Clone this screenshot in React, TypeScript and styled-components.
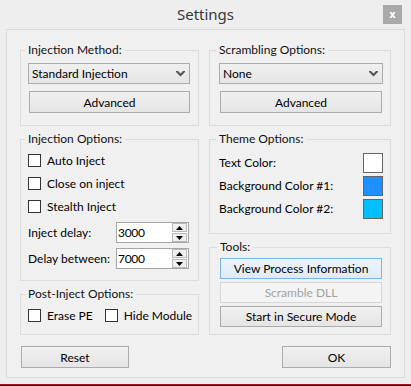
import styled, { createGlobalStyle } from "styled-components";

const GlobalStyle = createGlobalStyle`
  html, body {
    margin: 0;
    padding: 0;
    background: #3a0a0a;
  }
  body {
    font-family: "Lato", "Liberation Sans", sans-serif;
    font-size: 12px;
    color: #000;
  }
`;

const Chevron = () => (
  <svg width="9" height="7" viewBox="0 0 9 7">
    <polygon points="0,1 2,1 4.5,3.5 7,1 9,1 9,2 4.5,6.5 0,2" fill="#555" />
  </svg>
);

const Arrow = ({ up }: { up?: boolean }) => (
  <svg width="7" height="4" viewBox="0 0 7 4">
    <polygon points={up ? "3.5,0 7,4 0,4" : "0,0 7,0 3.5,4"} fill="#000" />
  </svg>
);

export default function App() {
  return (
    <Window>
      <GlobalStyle />
      <TitleBar>
        <Title>Settings</Title>
        <CloseButton>x</CloseButton>
      </TitleBar>
      <Panel>
        <Column>
          <Group $pad="6px 8px 12px 7px">
            <Legend>Injection Method:</Legend>
            <Select>
              <span>Standard Injection</span>
              <Chevron />
            </Select>
            <Button $mt={7} $h={22} style={{ marginLeft: 1 }}>
              Advanced
            </Button>
          </Group>
          <Group $pad="3px 8px 11px 7px">
            <Legend>Injection Options:</Legend>
            <CheckRow>
              <Box />
              Auto Inject
            </CheckRow>
            <CheckRow>
              <Box />
              Close on inject
            </CheckRow>
            <CheckRow>
              <Box />
              Stealth Inject
            </CheckRow>
            <SpinRow $mt={4}>
              <span>Inject delay:</span>
              <Spin>
                <SpinValue>3000</SpinValue>
                <SpinButtons>
                  <SpinButton>
                    <Arrow up />
                  </SpinButton>
                  <SpinButton>
                    <Arrow />
                  </SpinButton>
                </SpinButtons>
              </Spin>
            </SpinRow>
            <SpinRow $mt={5}>
              <span>Delay between:</span>
              <Spin>
                <SpinValue>7000</SpinValue>
                <SpinButtons>
                  <SpinButton>
                    <Arrow up />
                  </SpinButton>
                  <SpinButton>
                    <Arrow />
                  </SpinButton>
                </SpinButtons>
              </Spin>
            </SpinRow>
          </Group>
          <Group $pad="3px 8px 7px 7px">
            <Legend>Post-Inject Options:</Legend>
            <InlineChecks>
              <CheckRow>
                <Box />
                Erase PE
              </CheckRow>
              <CheckRow>
                <Box />
                Hide Module
              </CheckRow>
            </InlineChecks>
          </Group>
        </Column>
        <Column>
          <Group $pad="6px 7px 12px 9px">
            <Legend>Scrambling Options:</Legend>
            <Select>
              <span>None</span>
              <Chevron />
            </Select>
            <Button $mt={7} $h={22} style={{ margin: "7px 1px 0" }}>
              Advanced
            </Button>
          </Group>
          <Group $pad="5px 7px 13px 9px">
            <Legend>Theme Options:</Legend>
            <ColorRow>
              <span>Text Color:</span>
              <Swatch $color="#ffffff" />
            </ColorRow>
            <ColorRow>
              <span>Background Color #1:</span>
              <Swatch $color="#1e90ff" />
            </ColorRow>
            <ColorRow>
              <span>Background Color #2:</span>
              <Swatch $color="#00bfff" />
            </ColorRow>
          </Group>
          <Group $pad="4px 8px 7px 10px">
            <Legend>Tools:</Legend>
            <ToolStack>
              <Button $h={21} $variant="hover">
                View Process Information
              </Button>
              <Button $h={21} $variant="disabled">
                Scramble DLL
              </Button>
              <Button $h={21}>Start in Secure Mode</Button>
            </ToolStack>
          </Group>
        </Column>
        <Footer>
          <Button $h={22} $w={108} style={{ marginLeft: 1 }}>
            Reset
          </Button>
        </Footer>
        <Footer $end>
          <Button $h={22} $w={109}>
            OK
          </Button>
        </Footer>
      </Panel>
    </Window>
  );
}

const Window = styled.div`
  width: 411px;
  height: 384px;
  background: #eeeeee;
  display: flex;
  flex-direction: column;
  border-bottom: 1px solid #a01414;
`;

const TitleBar = styled.div`
  height: 29px;
  display: grid;
  grid-template-columns: 1fr auto 1fr;
  align-items: center;
`;

const Title = styled.div`
  grid-column: 2;
  font-family: "Noto Sans", "Liberation Sans", sans-serif;
  font-size: 15px;
  color: #383838;
  margin-top: -1px;
`;

const CloseButton = styled.div`
  justify-self: end;
  margin-right: 9px;
  width: 19px;
  height: 19px;
  background: #a9a9a9;
  color: #fff;
  font-family: "DejaVu Sans", sans-serif;
  font-weight: bold;
  font-size: 10px;
  display: flex;
  align-items: center;
  justify-content: center;
  line-height: 1;
`;

const Panel = styled.div`
  margin: 0 6px;
  height: 349px;
  box-sizing: border-box;
  border: 1px solid #dadada;
  background: #f0f0f0;
  padding: 13px 13px 9px;
  display: grid;
  grid-template-columns: 179px 1fr;
  grid-template-rows: 292px 22px;
  column-gap: 10px;
  row-gap: 11px;
`;

const Column = styled.div`
  display: flex;
  flex-direction: column;
  gap: 6px;
`;

const Group = styled.fieldset<{ $pad: string }>`
  margin: 0;
  padding: ${(p) => p.$pad};
  border: 1px solid #dcdcdc;
  min-width: 0;
  display: flex;
  flex-direction: column;
`;

const Legend = styled.legend`
  padding: 0 3px;
  margin-left: -3px;
  line-height: 14px;
  height: 14px;
  color: #111;
`;

const Select = styled.div`
  height: 21px;
  box-sizing: border-box;
  border: 1px solid #acacac;
  background: linear-gradient(#f0f0f0, #e5e5e5);
  display: flex;
  align-items: center;
  justify-content: space-between;
  padding: 0 4px 0 3px;
`;

const Button = styled.div<{
  $h: number;
  $w?: number;
  $mt?: number;
  $variant?: "hover" | "disabled";
}>`
  height: ${(p) => p.$h}px;
  width: ${(p) => (p.$w ? `${p.$w}px` : "auto")};
  margin-top: ${(p) => p.$mt ?? 0}px;
  box-sizing: border-box;
  display: flex;
  align-items: center;
  justify-content: center;
  border: 1px solid
    ${(p) =>
      p.$variant === "hover"
        ? "#7eb4ea"
        : p.$variant === "disabled"
          ? "#d6d6d6"
          : "#acacac"};
  background: ${(p) =>
    p.$variant === "hover"
      ? "linear-gradient(#ecf4fc, #dcecfc)"
      : p.$variant === "disabled"
        ? "#f4f4f4"
        : "linear-gradient(#f0f0f0, #e5e5e5)"};
  color: ${(p) => (p.$variant === "disabled" ? "#a3a3a3" : "#000")};
`;

const CheckRow = styled.label`
  height: 23px;
  display: flex;
  align-items: center;
  gap: 6px;
  white-space: nowrap;
  flex-shrink: 0;
`;

const InlineChecks = styled.div`
  display: flex;
  gap: 12px;
`;

const Box = styled.span`
  width: 13px;
  height: 13px;
  box-sizing: border-box;
  border: 1px solid #333;
  background: #fff;
  flex-shrink: 0;
`;

const SpinRow = styled.div<{ $mt: number }>`
  margin-top: ${(p) => p.$mt}px;
  display: flex;
  align-items: center;
  justify-content: space-between;
`;

const Spin = styled.div`
  width: 73px;
  height: 21px;
  box-sizing: border-box;
  border: 1px solid #a5a5a5;
  background: #fff;
  display: flex;
  align-items: center;
  justify-content: space-between;
  padding-left: 1px;
  margin-right: 1px;
`;

const SpinValue = styled.span`
  letter-spacing: -0.3px;
`;

const SpinButtons = styled.div`
  width: 15px;
  height: 19px;
  display: flex;
  flex-direction: column;
  gap: 1px;
  margin-right: 1px;
`;

const SpinButton = styled.div`
  flex: 1;
  box-sizing: border-box;
  border: 1px solid #b9b9b9;
  background: #f0f0f0;
  display: flex;
  align-items: center;
  justify-content: center;
`;

const ColorRow = styled.div`
  height: 23px;
  display: flex;
  align-items: center;
  justify-content: space-between;
`;

const Swatch = styled.div<{ $color: string }>`
  width: 20px;
  height: 20px;
  box-sizing: border-box;
  border: 1px solid #666;
  background: ${(p) => p.$color};
`;

const ToolStack = styled.div`
  display: flex;
  flex-direction: column;
  gap: 3px;
`;

const Footer = styled.div<{ $end?: boolean }>`
  display: flex;
  justify-content: ${(p) => (p.$end ? "flex-end" : "flex-start")};
`;
